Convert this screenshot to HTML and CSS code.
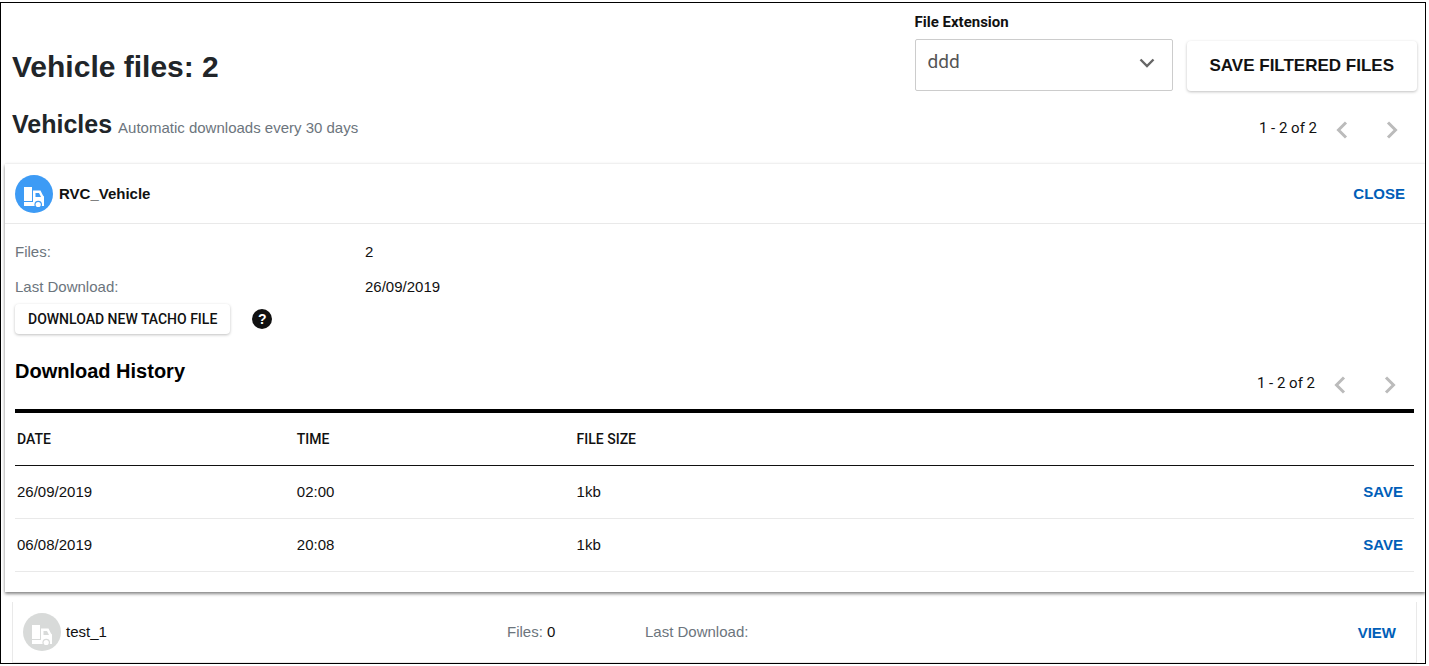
FILE: index.html
```html
<!DOCTYPE html>
<html lang="en">
<head>
    <meta charset="UTF-8">
    <meta name="viewport" content="width=device-width, initial-scale=1.0">
    <title>Vehicle files</title>
    <link rel="stylesheet" href="styles.css">
</head>
<body>
    <svg class="symbols" aria-hidden="true">
        <symbol id="truck" viewBox="0 0 38 38">
            <path fill="#fff" d="M9 12h8v14H9z"/>
            <path fill="#fff" d="M9 27h9V15.500h7.500l2.500 5 1 1V31H9z"/>
            <path d="M20.500 18h3.500l2 4h-5.500z"/>
            <circle cx="23.200" cy="29.500" r="3.800"/>
            <circle cx="23.200" cy="29.500" r="2.600" fill="#fff"/>
        </symbol>
        <symbol id="prev" viewBox="0 0 24 24">
            <path d="M16 4.500 8.500 12l7.500 7.500" fill="none" stroke="currentColor" stroke-width="3"/>
        </symbol>
        <symbol id="next" viewBox="0 0 24 24">
            <path d="M8 4.500 15.500 12 8 19.500" fill="none" stroke="currentColor" stroke-width="3"/>
        </symbol>
    </svg>

    <div class="page">
        <header class="page-header">
            <h1>Vehicle files: 2</h1>
            <div class="filters">
                <div class="field">
                    <label for="extension">File Extension</label>
                    <div class="select-wrap">
                        <select id="extension" name="extension">
                            <option value="ddd">ddd</option>
                        </select>
                        <svg class="select-arrow" viewBox="0 0 16 10" aria-hidden="true"><path d="M1.500 1.500 8 8l6.500-6.500" fill="none" stroke="#666" stroke-width="2.400"/></svg>
                    </div>
                </div>
                <button class="btn btn-large" type="button">SAVE FILTERED FILES</button>
            </div>
        </header>

        <div class="list-header">
            <div class="list-title">
                <h2>Vehicles</h2>
                <span class="muted">Automatic downloads every 30 days</span>
            </div>
            <div class="pager">
                <span>1 - 2 of 2</span>
                <button type="button" aria-label="Previous page"><svg><use href="#prev"/></svg></button>
                <button type="button" aria-label="Next page"><svg><use href="#next"/></svg></button>
            </div>
        </div>

        <section class="vehicle-open">
            <div class="vehicle-header">
                <svg class="avatar"><use href="#truck"/></svg>
                <h3 class="vehicle-name">RVC_Vehicle</h3>
                <button class="link" type="button">CLOSE</button>
            </div>
            <div class="vehicle-body">
                <dl class="details">
                    <dt>Files:</dt>
                    <dd>2</dd>
                    <dt>Last Download:</dt>
                    <dd>26/09/2019</dd>
                </dl>
                <div class="actions">
                    <button class="btn" type="button">DOWNLOAD NEW TACHO FILE</button>
                    <button class="help" type="button" aria-label="Help">?</button>
                </div>

                <div class="history-header">
                    <h3>Download History</h3>
                    <div class="pager">
                        <span>1 - 2 of 2</span>
                        <button type="button" aria-label="Previous page"><svg><use href="#prev"/></svg></button>
                        <button type="button" aria-label="Next page"><svg><use href="#next"/></svg></button>
                    </div>
                </div>
                <table>
                    <thead>
                        <tr>
                            <th>DATE</th>
                            <th>TIME</th>
                            <th>FILE SIZE</th>
                            <th></th>
                        </tr>
                    </thead>
                    <tbody>
                        <tr>
                            <td>26/09/2019</td>
                            <td>02:00</td>
                            <td>1kb</td>
                            <td><button class="link" type="button">SAVE</button></td>
                        </tr>
                        <tr>
                            <td>06/08/2019</td>
                            <td>20:08</td>
                            <td>1kb</td>
                            <td><button class="link" type="button">SAVE</button></td>
                        </tr>
                    </tbody>
                </table>
            </div>
        </section>

        <section class="vehicle-closed">
            <svg class="avatar avatar-off"><use href="#truck"/></svg>
            <h3 class="vehicle-name">test_1</h3>
            <p class="files"><span class="muted">Files:</span> 0</p>
            <p class="muted">Last Download:</p>
            <button class="link" type="button">VIEW</button>
        </section>
    </div>
</body>
</html>
```
FILE: styles.css
```css
* {
    box-sizing: border-box;
}

body {
    margin: 2px 3px 1px 0;
    background-color: #fff;
    color: #111;
    font-family: "Liberation Sans", Arial, sans-serif;
    font-size: 15px;
    line-height: 20px;
}

h1, h2, h3, p, dl, dd {
    margin: 0;
}

button {
    font-family: inherit;
    cursor: pointer;
}

.symbols {
    display: none;
}

.page {
    border: 1px solid #000;
}

.muted {
    color: #6c757d;
}

/* top bar */
.page-header {
    display: flex;
    justify-content: space-between;
    padding: 9px 8px 0 11px;
}

h1 {
    margin-top: 37px;
    color: #212529;
    font-size: 30px;
    line-height: 36px;
}

.filters {
    display: flex;
    align-items: flex-end;
    gap: 14px;
}

.field label {
    display: block;
    margin-bottom: 7px;
    font-family: Roboto, sans-serif;
    font-weight: bold;
}

.select-wrap {
    position: relative;
}

select {
    display: block;
    width: 258px;
    height: 52px;
    padding: 0 12px 8px;
    border: 1px solid #ccc;
    border-radius: 2px;
    background-color: #fff;
    color: #555;
    font-family: Roboto, sans-serif;
    font-size: 19px;
    appearance: none;
}

.select-arrow {
    position: absolute;
    top: 19px;
    right: 18px;
    width: 16px;
    height: 10px;
    pointer-events: none;
}

.btn {
    height: 30px;
    padding: 0 13px;
    border: none;
    border-radius: 4px;
    background-color: #fff;
    box-shadow: 0 1px 3px rgba(0, 0, 0, 0.25);
    color: #111;
    font-family: Roboto, sans-serif;
    font-size: 14px;
    font-weight: 500;
}

.btn-large {
    height: 50px;
    padding: 0 23px;
    font-family: "Liberation Sans", Arial, sans-serif;
    font-size: 17px;
    font-weight: bold;
}

/* list title and paging */
.list-header {
    display: flex;
    justify-content: space-between;
    padding: 18px 21px 22px 11px;
}

.list-title {
    display: flex;
    align-items: baseline;
    gap: 6px;
}

h2 {
    color: #212529;
    font-size: 25px;
    line-height: 30px;
}

.pager {
    display: flex;
    align-items: center;
    gap: 26px;
    font-family: Roboto, sans-serif;
}

.list-header .pager {
    padding-top: 9px;
}

.pager span {
    margin-right: -13px;
    padding-bottom: 4px;
}

.pager button {
    padding: 0;
    border: none;
    background: none;
    color: #bbb;
}

.pager svg {
    display: block;
    width: 24px;
    height: 24px;
}

/* vehicle cards */
.vehicle-open {
    margin-left: 4px;
    padding-bottom: 20px;
    box-shadow: 0 2px 3px rgba(0, 0, 0, 0.45), 0 0 3px rgba(0, 0, 0, 0.1);
}

.vehicle-header {
    display: flex;
    align-items: center;
    gap: 6px;
    height: 60px;
    padding: 0 20px 0 10px;
    border-bottom: 1px solid #e9e9e9;
}

.avatar {
    width: 38px;
    height: 38px;
    border-radius: 50%;
    background-color: #3d9bf5;
    fill: #3d9bf5;
}

.avatar-off {
    background-color: #d8dad9;
    fill: #d8dad9;
}

.vehicle-name {
    font-size: 15px;
    font-weight: bold;
}

.link {
    margin-left: auto;
    padding: 0;
    border: none;
    background: none;
    color: #005eb8;
    font-size: 15px;
    font-weight: bold;
}

.vehicle-body {
    padding: 10px 11px 0 10px;
}

.details {
    display: grid;
    grid-template-columns: 350px 1fr;
    line-height: 35px;
}

.details dt {
    color: #6c757d;
}

.actions {
    display: flex;
    align-items: center;
    gap: 22px;
}

.help {
    width: 20px;
    height: 20px;
    padding: 0;
    border: none;
    border-radius: 50%;
    background-color: #111;
    color: #fff;
    font-size: 14px;
    font-weight: bold;
    line-height: 20px;
}

.history-header {
    display: flex;
    justify-content: space-between;
    padding: 23px 12px 0 0;
}

.history-header h3 {
    color: #000;
    font-size: 20px;
    line-height: 28px;
}

.history-header .pager {
    padding-top: 16px;
}

table {
    width: 100%;
    margin-top: 12px;
    border-top: 4px solid #000;
    border-spacing: 0;
    table-layout: fixed;
}

th, td {
    width: 20%;
    height: 53px;
    padding: 0 2px;
    border-bottom: 1px solid #e9e9e9;
    text-align: left;
}

th {
    border-bottom-color: #111;
    font-family: Roboto, sans-serif;
    font-size: 14px;
    font-weight: 500;
}

th:last-child, td:last-child {
    width: 40%;
    padding-right: 11px;
    text-align: right;
}

.vehicle-closed {
    display: flex;
    align-items: center;
    gap: 5px;
    height: 61px;
    margin: 10px 8px 0 11px;
    padding: 0 20px 0 10px;
    border: solid #e9e9e9;
    border-width: 0 1px 1px;
}

.vehicle-closed .vehicle-name {
    flex: 0 0 436px;
    font-weight: normal;
}

.files {
    flex: 0 0 133px;
}
```
